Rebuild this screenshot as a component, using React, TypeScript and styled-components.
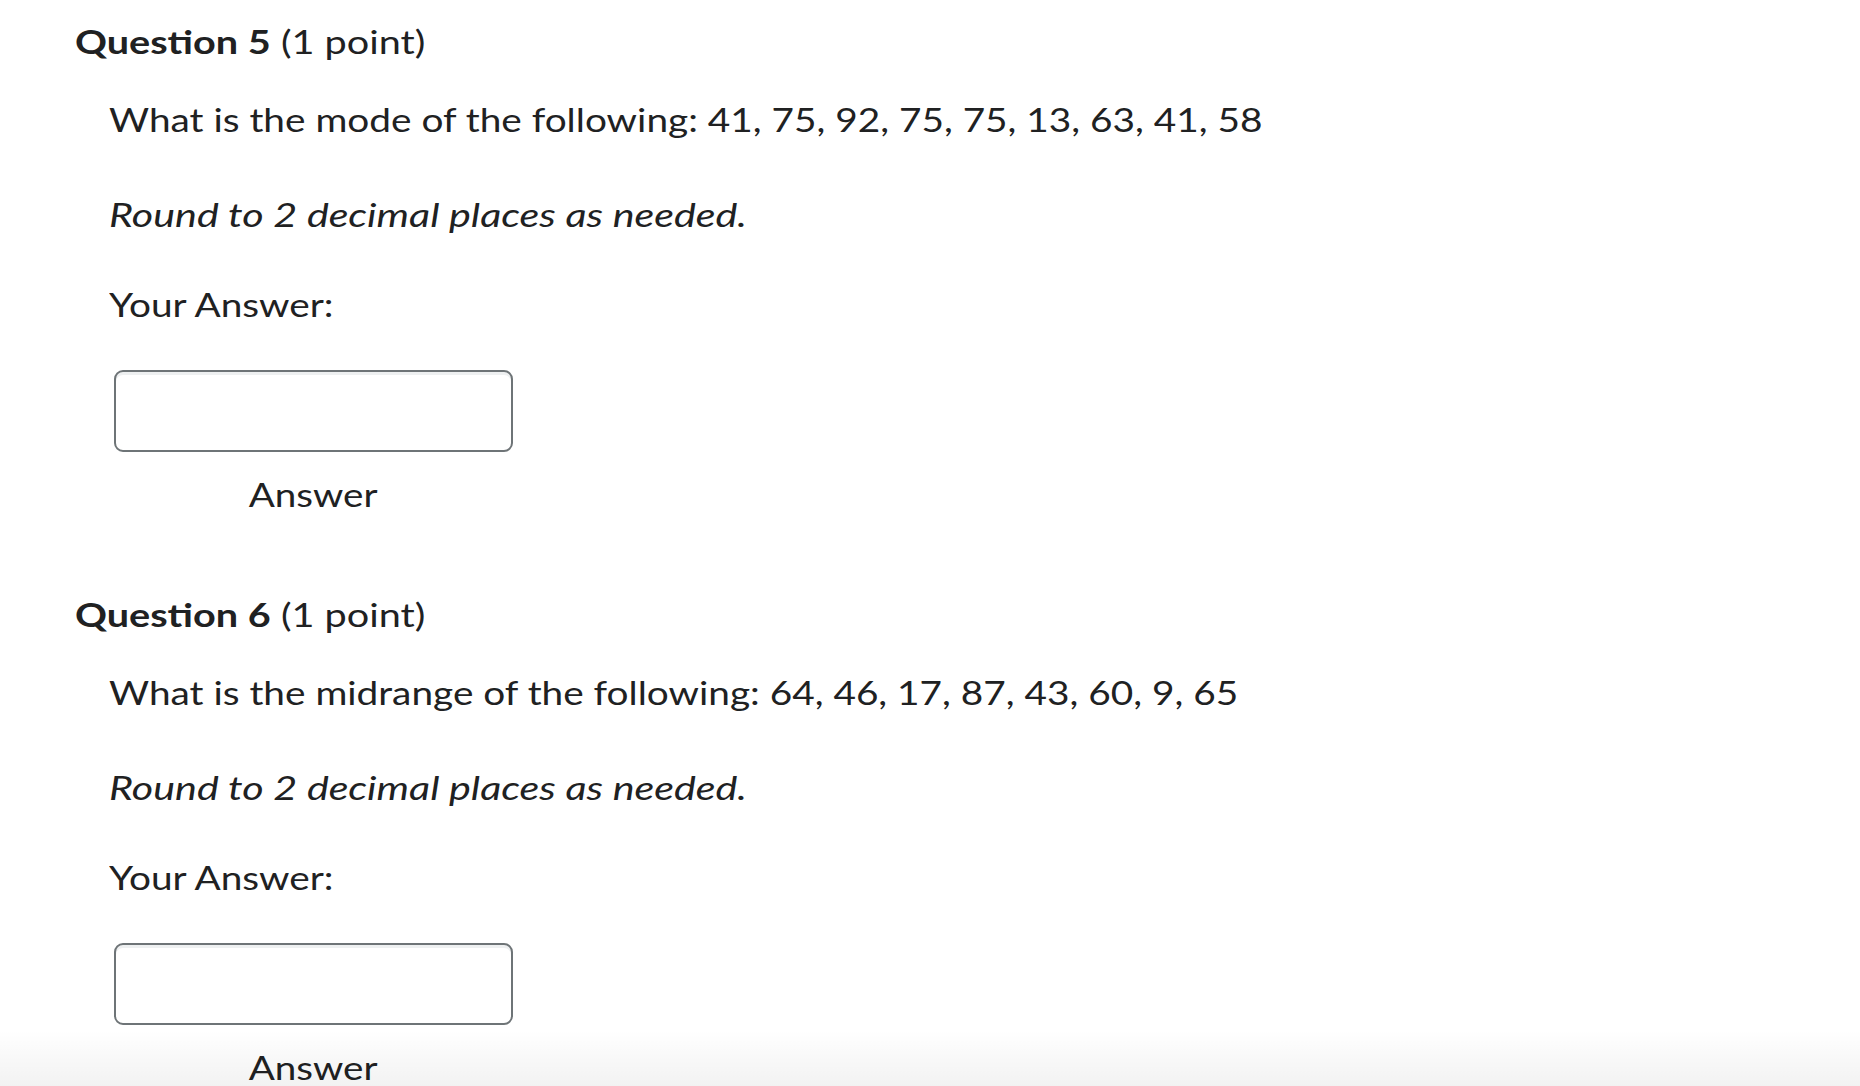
import React from "react";
import styled, { createGlobalStyle } from "styled-components";

const GlobalStyle = createGlobalStyle`
  html, body {
    margin: 0;
    padding: 0;
    background: #ffffff;
  }
  body {
    font-family: Lato, "Noto Sans", "Liberation Sans", sans-serif;
    color: #202122;
    overflow: hidden;
  }
`;

const Page = styled.div`
  position: relative;
  width: 1860px;
  height: 1086px;
  overflow: hidden;
  padding: 21px 0 0 75px;
  box-sizing: border-box;
`;

const QuestionBlock = styled.section`
  display: flex;
  flex-direction: column;
  align-items: flex-start;
  margin-bottom: 80px;
`;

const Heading = styled.h2`
  margin: 0;
  font-size: 33px;
  line-height: 40px;
  font-weight: 400;
  color: #202122;
  white-space: nowrap;
  transform: scaleX(1.2);
  transform-origin: left center;
`;

const Strong = styled.span`
  font-weight: 700;
`;

const Body = styled.div`
  display: flex;
  flex-direction: column;
  align-items: flex-start;
  padding-left: 34px;
`;

const Text = styled.p<{ $italic?: boolean; $top: number }>`
  margin: ${(p) => p.$top}px 0 0 0;
  font-size: 33px;
  line-height: 40px;
  font-style: ${(p) => (p.$italic ? "italic" : "normal")};
  color: #202122;
  white-space: nowrap;
  transform: scaleX(${(p) => (p.$italic ? 1.25 : 1.175)});
  transform-origin: left center;
`;

const AnswerField = styled.div`
  display: flex;
  flex-direction: column;
  align-items: center;
  margin: 46px 0 0 5px;
  width: 399px;
`;

const Input = styled.input`
  box-sizing: border-box;
  width: 399px;
  height: 82px;
  border: 2px solid #6e7477;
  border-radius: 9px;
  background: #ffffff;
  box-shadow: inset 0 3px 0 0 rgba(177, 185, 190, 0.22);
  outline: none;
  padding: 0 16px;
  font-family: inherit;
  font-size: 33px;
`;

const AnswerLabel = styled.label`
  margin-top: 22px;
  font-size: 33px;
  line-height: 40px;
  color: #202122;
  white-space: nowrap;
  transform: scaleX(1.17);
  transform-origin: center center;
`;

const BottomFade = styled.div`
  position: absolute;
  left: 0;
  right: 0;
  bottom: 0;
  height: 56px;
  background: linear-gradient(to bottom, rgba(0, 0, 0, 0), rgba(0, 0, 0, 0.05));
  pointer-events: none;
`;

type Q = { num: number; text: string };

const questions: Q[] = [
  { num: 5, text: "What is the mode of the following: 41, 75, 92, 75, 75, 13, 63, 41, 58" },
  { num: 6, text: "What is the midrange of the following: 64, 46, 17, 87, 43, 60, 9, 65" },
];

export default function App() {
  return (
    <>
      <GlobalStyle />
      <Page>
        {questions.map((q) => (
          <QuestionBlock key={q.num}>
            <Heading>
              <Strong>Question {q.num}</Strong> (1 point)
            </Heading>
            <Body>
              <Text $top={38}>{q.text}</Text>
              <Text $top={55} $italic>
                Round to 2 decimal places as needed.
              </Text>
              <Text $top={50}>Your Answer:</Text>
              <AnswerField>
                <Input id={`answer-${q.num}`} type="text" aria-label="Answer" />
                <AnswerLabel htmlFor={`answer-${q.num}`}>Answer</AnswerLabel>
              </AnswerField>
            </Body>
          </QuestionBlock>
        ))}
        <BottomFade />
      </Page>
    </>
  );
}
